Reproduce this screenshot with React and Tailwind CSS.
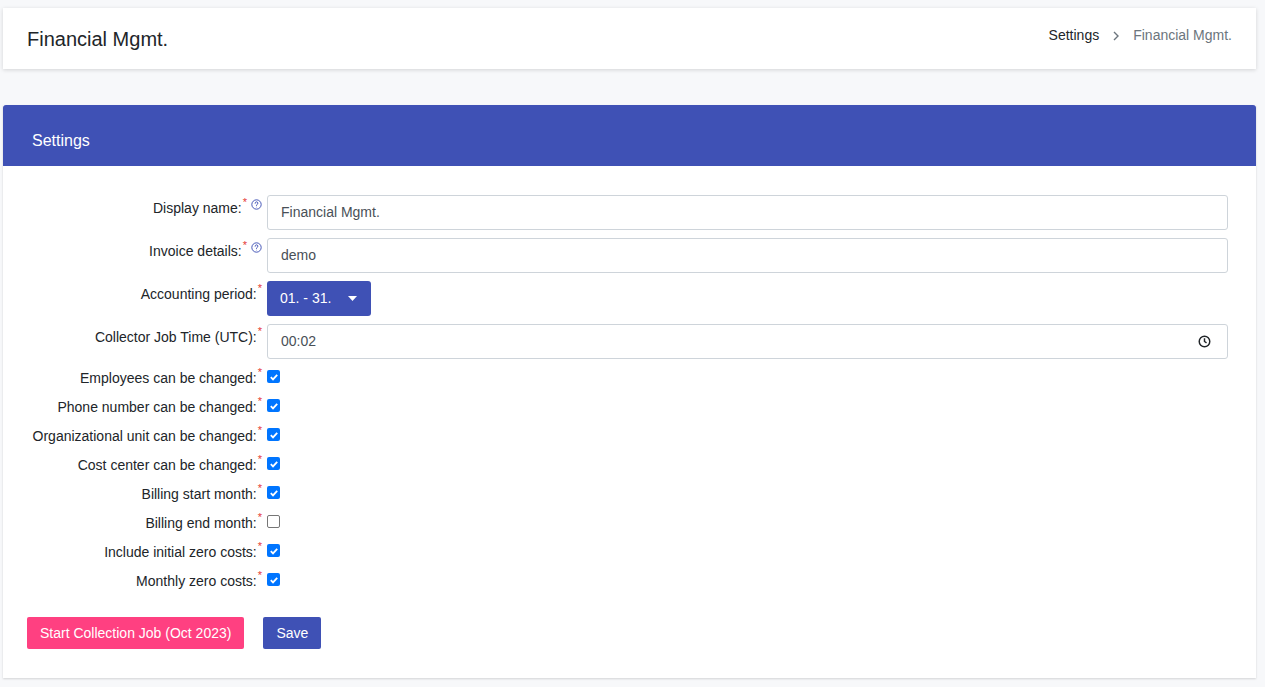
import React from "react";

const Help = () => (
  <svg width="11" height="11" viewBox="0 0 16 16" className="ml-[4px] mt-[1px] text-[#3f51b5]" fill="none" stroke="currentColor" strokeWidth="1.4">
    <circle cx="8" cy="8" r="6.8" />
    <path d="M6 6.2a2 2 0 1 1 2.8 1.8c-.6.3-.8.7-.8 1.3v.4" strokeLinecap="round" />
    <circle cx="8" cy="11.8" r="0.6" fill="currentColor" stroke="none" />
  </svg>
);

const Label = ({ children, help, top = "pt-[2px]" }) => (
  <div className={`w-[259px] shrink-0 flex justify-end items-start ${top}`}>
    <span>{children}:</span>
    <span className="text-[#e53935] text-[11px] leading-none ml-[1px] -mt-[1px]">*</span>
    {help && <Help />}
  </div>
);

const checks = [
  ["Employees can be changed", true],
  ["Phone number can be changed", true],
  ["Organizational unit can be changed", true],
  ["Cost center can be changed", true],
  ["Billing start month", true],
  ["Billing end month", false],
  ["Include initial zero costs", true],
  ["Monthly zero costs", true],
];

export default function App() {
  return (
    <div className="min-h-[687px] bg-[#f7f8fa] pt-[8px] px-[3px] pr-[9px] text-[14px] text-[#212529]" style={{ fontFamily: "Arial, 'Liberation Sans', sans-serif" }}>
      <div className="bg-white h-[61px] flex items-center justify-between px-[24px] shadow-[0_1px_4px_rgba(0,0,0,0.15)]">
        <div className="text-[20px] text-[#212529]">Financial Mgmt.</div>
        <div className="flex items-center text-[14px] -mt-[6px]">
          <span>Settings</span>
          <svg width="8" height="10" viewBox="0 0 8 10" className="mx-[13px]" fill="none" stroke="#6c757d" strokeWidth="1.4"><path d="M2 1l4 4-4 4" /></svg>
          <span className="text-[#6c757d]">Financial Mgmt.</span>
        </div>
      </div>
      <div className="mt-[36px] bg-white shadow-[0_1px_2px_rgba(0,0,0,0.15)]">
        <div className="bg-[#3f51b5] h-[61px] flex items-end pb-[13px] px-[29px] text-white text-[16px] rounded-t-[3px]">Settings</div>
        <div className="pt-[29px] pb-[29px] pr-[28px]">
          <div className="flex flex-col gap-[8px]">
            <div className="flex gap-[5px]">
              <Label help top="pt-[3px]">Display name</Label>
              <div className="flex-1 h-[35px] border border-[#ced4da] rounded-[3px] flex items-center px-[13px] text-[#495057]">Financial Mgmt.</div>
            </div>
            <div className="flex gap-[5px]">
              <Label help top="pt-[3px]">Invoice details</Label>
              <div className="flex-1 h-[35px] border border-[#ced4da] rounded-[3px] flex items-center px-[13px] text-[#495057]">demo</div>
            </div>
            <div className="flex gap-[5px]">
              <Label top="pt-[3px]">Accounting period</Label>
              <div className="w-[104px] h-[35px] bg-[#3f51b5] rounded-[3px] text-white flex items-center px-[13px] justify-between">
                <span>01. - 31.</span>
                <svg width="9" height="5" viewBox="0 0 9 5" className="mr-[1px]"><path d="M0 0h9L4.5 5z" fill="white" /></svg>
              </div>
            </div>
            <div className="flex gap-[5px]">
              <Label top="pt-[3px]">Collector Job Time (UTC)</Label>
              <div className="flex-1 h-[35px] border border-[#ced4da] rounded-[3px] flex items-center justify-between px-[13px] pr-[16px] text-[#495057]">
                <span>00:02</span>
                <svg width="13" height="13" viewBox="0 0 16 16" fill="none" stroke="#212529" strokeWidth="1.8"><circle cx="8" cy="8" r="6.5" /><path d="M8 4v4l2.5 1.8" /></svg>
              </div>
            </div>
          </div>
          <div className="flex flex-col mt-[4px]">
            {checks.map(([l, c]) => (
              <div key={l} className="flex gap-[5px] h-[29px] items-start pt-[5px]">
                <Label top="pt-[0px]">{l}</Label>
                <div className={`w-[13px] h-[13px] mt-[2px] rounded-[2px] flex items-center justify-center ${c ? "bg-[#0075ff]" : "border border-[#767676] bg-white"}`}>
                  {c && <svg width="10" height="10" viewBox="0 0 10 10" fill="none" stroke="white" strokeWidth="1.8"><path d="M1.8 5.2l2.2 2.2 4.2-4.6" /></svg>}
                </div>
              </div>
            ))}
          </div>
          <div className="flex gap-[19px] pl-[24px] mt-[22px]">
            <div className="h-[32px] px-[13px] bg-[#ff4081] text-white rounded-[2px] flex items-center">Start Collection Job (Oct 2023)</div>
            <div className="h-[32px] px-[13px] bg-[#3f51b5] text-white rounded-[2px] flex items-center">Save</div>
          </div>
        </div>
      </div>
    </div>
  );
}
